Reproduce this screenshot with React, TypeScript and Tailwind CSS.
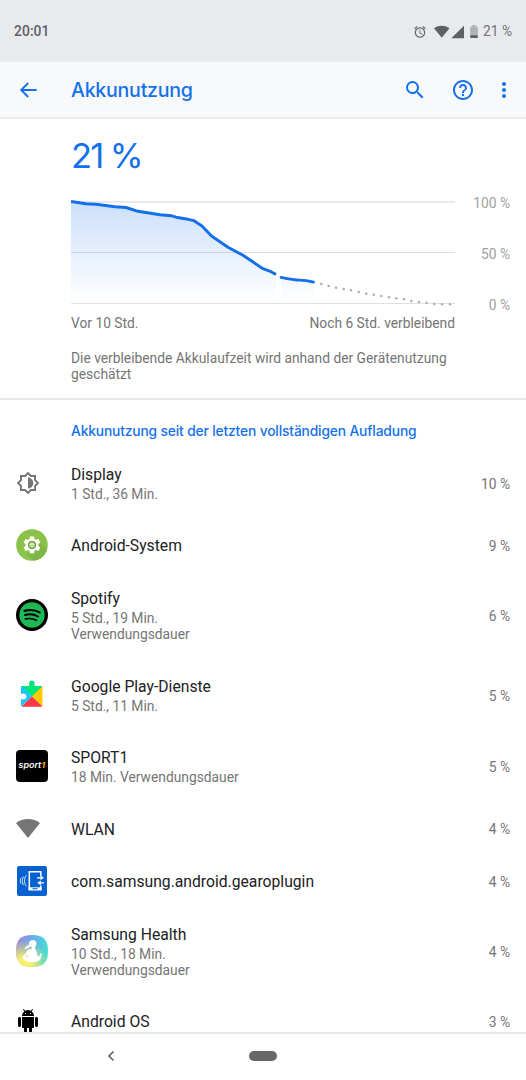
import React from "react";

type IconName =
  | "display" | "system" | "spotify" | "play" | "sport" | "wifi" | "gear" | "health" | "android";

interface Usage {
  name: string;
  lines: string[];
  percent: string;
  icon: IconName;
}

const usages: Usage[] = [
  { name: "Display", lines: ["1 Std., 36 Min."], percent: "10 %", icon: "display" },
  { name: "Android-System", lines: [], percent: "9 %", icon: "system" },
  { name: "Spotify", lines: ["5 Std., 19 Min.", "Verwendungsdauer"], percent: "6 %", icon: "spotify" },
  { name: "Google Play-Dienste", lines: ["5 Std., 11 Min."], percent: "5 %", icon: "play" },
  { name: "SPORT1", lines: ["18 Min. Verwendungsdauer"], percent: "5 %", icon: "sport" },
  { name: "WLAN", lines: [], percent: "4 %", icon: "wifi" },
  { name: "com.samsung.android.gearoplugin", lines: [], percent: "4 %", icon: "gear" },
  { name: "Samsung Health", lines: ["10 Std., 18 Min.", "Verwendungsdauer"], percent: "4 %", icon: "health" },
  { name: "Android OS", lines: [], percent: "3 %", icon: "android" },
];

const rowHeights = ["h-[52.5px]", "h-[71.6px]", "h-[87.6px]"];

function AppIcon({ name }: { name: IconName }) {
  switch (name) {
    case "display":
      return (
        <svg viewBox="0 0 24 24" className="size-6" fill="#757575">
          <path d="M20 15.310L23.310 12 20 8.690V4h-4.690L12 .690 8.690 4H4v4.690L.690 12 4 15.310V20h4.690L12 23.310 15.310 20H20v-4.690zM18.100 14.500v3.600h-3.600L12 20.600l-2.500-2.500H5.900v-3.600L3.400 12l2.500-2.500V5.900h3.600L12 3.400l2.500 2.500h3.600v3.600l2.500 2.500z" />
          <path d="M12 6.500c3 0 5.300 2.500 5.300 5.500s-2.300 5.500-5.300 5.500z" />
        </svg>
      );
    case "system":
      return (
        <svg viewBox="0 0 32 32" className="size-8">
          <defs>
            <clipPath id="systemDisc"><circle cx="16" cy="16" r="15.800" /></clipPath>
          </defs>
          <circle cx="16" cy="16" r="15.800" fill="#8bc34a" />
          <path clipPath="url(#systemDisc)" d="M24 14l10 10v10H20l-9-9 5-7z" fill="#80b646" />
          <path transform="translate(5.800 5.800) scale(.85)" fill="#fff" d="M19.430 12.980c.040-.320.070-.640.070-.980s-.030-.660-.070-.980l2.110-1.650c.190-.150.240-.420.120-.640l-2-3.460c-.120-.220-.390-.300-.610-.220l-2.490 1c-.520-.400-1.080-.730-1.690-.980l-.380-2.650C14.460 2.180 14.250 2 14 2h-4c-.250 0-.460.180-.490.420l-.380 2.650c-.610.250-1.170.590-1.690.980l-2.490-1c-.230-.090-.490 0-.610.220l-2 3.460c-.130.220-.070.490.120.640l2.110 1.650c-.040.320-.070.650-.070.980s.030.660.070.980l-2.110 1.650c-.190.150-.240.420-.120.640l2 3.460c.120.220.390.300.610.220l2.490-1c.520.400 1.080.730 1.690.980l.380 2.650c.030.240.240.420.490.420h4c.250 0 .460-.180.490-.420l.380-2.650c.610-.250 1.170-.590 1.690-.980l2.490 1c.230.090.490 0 .610-.220l2-3.460c.120-.220.070-.490-.120-.640z" />
          <circle cx="16" cy="16" r="3.400" fill="#c9e4a8" stroke="#67962f" strokeWidth="1.200" />
        </svg>
      );
    case "spotify":
      return (
        <svg viewBox="0 0 32 32" className="size-8" fill="none" strokeLinecap="round">
          <circle cx="16" cy="16" r="16" fill="#000" />
          <circle cx="16" cy="16" r="12.700" fill="#1eb955" />
          <path d="M8.600 11.900c5-1.400 10.800-.9 15 1.500" stroke="#000" strokeWidth="2.200" />
          <path d="M9 16c4.500-1.200 9.300-.7 13 1.500" stroke="#000" strokeWidth="1.900" />
          <path d="M9.400 19.900c4-.9 7.800-.5 11 1.400" stroke="#000" strokeWidth="1.600" />
        </svg>
      );
    case "play":
      return (
        <svg viewBox="0 0 32 32" className="size-8">
          <path d="M6.500 7h5.700c.8 0 1.200-.6 1-1.300a2.900 2.900 0 1 1 5.200 0c-.3.700.2 1.300 1 1.300h5.700c.8 0 1.400.6 1.300 1.300L15.900 17.500 5.200 7.400z" fill="#00e676" />
          <path d="M6 7.100L15.900 17.500 5.500 27.300c-.3-.3-.5-.6-.5-1v-5.300c0-.8.6-1.200 1.300-.9a2.900 2.900 0 1 0 0-5.200C5.600 15.200 5 14.800 5 14V8.400c0-.7.4-1.200 1-1.300z" fill="#18c5ff" />
          <path d="M26 7.400L15.900 17.500 26 27.500c.4-.3.500-.6.500-1V8.400c0-.4-.2-.8-.5-1z" fill="#ffca00" />
          <path d="M15.900 17.500L5.500 27.400c.3.200.6.300.9.300h18.800c.4 0 .7-.1.900-.4z" fill="#f63749" />
        </svg>
      );
    case "sport":
      return (
        <svg viewBox="0 0 32 32" className="size-8">
          <rect width="32" height="32" rx="4" fill="#000" />
          <text x="2.600" y="18.300" textLength="26.500" lengthAdjust="spacingAndGlyphs" fontSize="8" fontWeight="600" fontStyle="italic" fontFamily="Inter, sans-serif" fill="#fff">
            sport<tspan fill="#ffa51e" fontWeight="700">1</tspan>
          </text>
        </svg>
      );
    case "wifi":
      return (
        <svg viewBox="0 0 24 24" className="size-6" fill="#757575">
          <path d="M0 7C6.800 1.600 17.200 1.600 24 7L12 22z" />
        </svg>
      );
    case "gear":
      return (
        <svg viewBox="0 0 32 32" className="size-8" fill="none" stroke="#fff">
          <rect x="1" y="1" width="30" height="30" rx="2" fill="#0762d1" stroke="none" />
          <path d="M24.800 11V6.800H13.300v17.500h11.500V20.500" strokeWidth="1.500" />
          <path d="M12.600 22.300h12.900v3.200H12.600z" fill="#fff" stroke="none" />
          <path d="M16.500 23.700h5" stroke="#0762d1" strokeWidth="1.100" />
          <path d="M21 12.800h4.500M23.500 17.800H28" strokeWidth="1.300" />
          <path d="M24.500 10.400v4.800l3.500-2.400zM24.800 15.400v4.800l-3.600-2.400z" fill="#fff" stroke="none" />
          <path d="M5.200 12.700c-1.200 2-1.200 4.200 0 6.200M7.600 11.500c-1.700 2.700-1.700 5.900 0 8.600M10.200 10.300c-2.300 3.500-2.300 7.500 0 11" strokeWidth=".8" />
        </svg>
      );
    case "health":
      return (
        <svg viewBox="0 0 32 32" className="size-8">
          <defs>
            <linearGradient id="healthBase" x1="0" y1=".3" x2="1" y2=".45">
              <stop offset="0" stopColor="#a585dc" />
              <stop offset=".5" stopColor="#66aeea" />
              <stop offset="1" stopColor="#45e0d0" />
            </linearGradient>
            <radialGradient id="healthGlow" cx=".22" cy="1" r=".85">
              <stop offset=".3" stopColor="#faf06a" />
              <stop offset="1" stopColor="#d8f070" stopOpacity="0" />
            </radialGradient>
          </defs>
          <path d="M16 0C27.500 0 32 4.500 32 16s-4.500 16-16 16S0 27.500 0 16 4.500 0 16 0z" fill="url(#healthBase)" />
          <path d="M16 0C27.500 0 32 4.500 32 16s-4.500 16-16 16S0 27.500 0 16 4.500 0 16 0z" fill="url(#healthGlow)" />
          <circle cx="16.800" cy="8.600" r="3.700" fill="#fff" />
          <path d="M14 9.500c-2.400.5-4.600 1.900-5.600 4.600 2.400.1 4-1.300 6-2.600z" fill="#fff" />
          <path d="M13.800 14.300c1.500-.2 2.300-.9 2.300-2.500h3c-.2 1.300 0 2 .5 2.700 1 1.500 1.400 3.500 1.500 5.500l1.800 1.400c1-.9 1-2.100 1.500-2.900.6-.8 1.700.1 1.400 1-.6 2.600-1.300 5.300-3 6.200-4 2.200-9.600 2-12.800.3-1.400-.8-3.600-2.600-3.700-4 .8-1.800 3.800-3.500 4.400-5.600.5-1.300 1.500-1.900 3.100-2.100z" fill="#fff" />
          <path d="M11.500 18.800c-.5 1.200-1.300 1.900-2.200 2.500l2 1.100c.6-1.100.6-2.300.2-3.600z" fill="#d8e69a" />
        </svg>
      );
    case "android":
      return (
        <svg viewBox="0 0 24 24" className="size-6" fill="#000">
          <path d="M6 18c0 .550.450 1 1 1h1v3.500c0 .830.670 1.500 1.500 1.500s1.500-.670 1.500-1.500V19h2v3.500c0 .830.670 1.500 1.500 1.500s1.500-.670 1.500-1.500V19h1c.550 0 1-.450 1-1V8H6v10zM3.500 8C2.670 8 2 8.670 2 9.500v7c0 .830.670 1.500 1.500 1.500S5 17.330 5 16.500v-7C5 8.670 4.330 8 3.500 8zm17 0c-.830 0-1.500.670-1.500 1.500v7c0 .830.670 1.500 1.500 1.500s1.500-.670 1.500-1.500v-7c0-.830-.670-1.500-1.500-1.500zm-4.970-5.840l1.300-1.300c.200-.200.200-.510 0-.710-.200-.200-.510-.200-.710 0l-1.480 1.480C13.850 1.230 12.950 1 12 1c-.960 0-1.860.230-2.660.630L7.850.150c-.200-.200-.510-.200-.710 0-.200.200-.200.510 0 .710l1.310 1.310C6.970 3.260 6 5.010 6 7h12c0-1.990-.970-3.750-2.470-4.840zM10 5H9V4h1v1zm5 0h-1V4h1v1z" />
        </svg>
      );
  }
}

function StatusBar() {
  return (
    <header className="flex h-[62px] items-center justify-between bg-[#e8eaed] pl-[14px] pr-[14px] pt-px text-[13.8px] text-[#5f6062]">
      <span className="font-medium tracking-[0.1px]">20:01</span>
      <div className="flex items-center">
        <svg viewBox="0 0 24 24" className="mr-[7px] size-[14px]" fill="#66686a">
          <path d="M22 5.720l-4.600-3.860-1.290 1.530 4.600 3.860L22 5.720zM7.880 3.390L6.600 1.860 2 5.710l1.290 1.530 4.590-3.850zM12.500 8H11v6l4.750 2.850.750-1.230-4-2.370V8zM12 4c-4.970 0-9 4.030-9 9s4.020 9 9 9a9 9 0 0 0 0-18zm0 16c-3.870 0-7-3.130-7-7s3.130-7 7-7 7 3.130 7 7-3.130 7-7 7z" />
        </svg>
        <svg viewBox="0 0 30 14" className="mr-[6px] h-[14px] w-[30px]" fill="#5f6062">
          <path d="M0 3.200C4.500-.1 11-.1 15.500 3.200L7.750 12.800zM30 .8V13.200H17.300z" />
        </svg>
        <svg viewBox="0 0 8 14" className="mr-[5px] h-[14px] w-2">
          <path d="M2.300 0h3.400v1.500H7c.5 0 .8.300.8.800V11H.2V2.300c0-.5.3-.8.800-.8h1.300z" fill="#afb1b3" />
          <path d="M.2 10.300h7.600v2c0 .5-.3.800-.8.800H1c-.5 0-.8-.3-.8-.8z" fill="#5f6062" />
        </svg>
        <span className="text-[#707274]">21 %</span>
      </div>
    </header>
  );
}

function Toolbar() {
  return (
    <nav className="flex h-[57px] items-center border-b-2 border-[#eaebec] bg-[#f8f9fb] text-[#1471ea]">
      <svg viewBox="0 0 24 24" className="ml-4 size-6" fill="none" stroke="currentColor" strokeWidth="1.900">
        <path d="M20.700 12H5.500M12.200 5L5.200 12l7 7" />
      </svg>
      <h1 className="ml-[31px] flex-1 pt-[2px] font-[Inter] text-[19.6px] font-medium tracking-[-0.25px]">Akkunutzung</h1>
      <svg viewBox="0 0 24 24" className="size-6" fill="currentColor">
        <path d="M15.500 14h-.790l-.280-.270A6.471 6.471 0 0 0 16 9.500 6.500 6.500 0 1 0 9.500 16c1.610 0 3.090-.590 4.230-1.570l.270.280v.790l5 4.990L20.490 19l-4.990-5zm-6 0C7.010 14 5 11.990 5 9.500S7.010 5 9.500 5 14 7.010 14 9.500 11.990 14 9.500 14z" />
      </svg>
      <svg viewBox="0 0 24 24" className="ml-[23.5px] size-6" fill="currentColor">
        <path d="M11 18h2v-2h-2v2zm1-16C6.480 2 2 6.480 2 12s4.480 10 10 10 10-4.480 10-10S17.520 2 12 2zm0 18c-4.410 0-8-3.590-8-8s3.590-8 8-8 8 3.590 8 8-3.590 8-8 8zm0-14c-2.210 0-4 1.790-4 4h2c0-1.100.900-2 2-2s2 .900 2 2c0 2-3 1.750-3 5h2c0-2.250 3-2.500 3-5 0-2.210-1.790-4-4-4z" />
      </svg>
      <svg viewBox="0 0 24 24" className="ml-[17.5px] mr-[10px] size-6" fill="currentColor">
        <circle cx="12" cy="6" r="2" /><circle cx="12" cy="12" r="2" /><circle cx="12" cy="18" r="2" />
      </svg>
    </nav>
  );
}

const mainCurve =
  "0,5.500 15,7.700 25,8.300 44,10.700 55,11.500 67,15.300 89,18.700 100,19.700 105,21.200 117,23.300 123,24.700 131,30 140.500,40 157,51.300 172,59.300 192,72.700 200,75.700 205,78.500";
const forecast = [
  [250.3, 88], [257.7, 90], [265, 91.7], [272.7, 93], [280, 94.3], [287.7, 96], [295.3, 97.7],
  [302.7, 98.7], [310.3, 100], [318, 101.3], [325.3, 102.3], [333, 103.3], [340.3, 105],
  [348, 106], [355.7, 107], [363.3, 108], [371, 108.3], [379, 108.3],
];

function BatteryChart() {
  return (
    <svg viewBox="0 0 384 112" className="h-[112px] w-[384px] shrink-0" fill="none">
      <defs>
        <linearGradient id="levelFill" x1="0" y1="6" x2="0" y2="108" gradientUnits="userSpaceOnUse">
          <stop offset="0" stopColor="#1a73e8" stopOpacity=".22" />
          <stop offset="1" stopColor="#1a73e8" stopOpacity="0" />
        </linearGradient>
      </defs>
      <path d="M0 6h384" stroke="#e9eaea" strokeWidth="1.800" />
      <path d="M0 56.500h384M0 107.500h384" stroke="#dfe0e1" strokeWidth="1" />
      <polygon points={`${mainCurve} 205,108 0,108`} fill="url(#levelFill)" />
      <polygon points="210,81.300 226,84 237,84.700 242.500,86.300 242.500,108 210,108" fill="url(#levelFill)" />
      <polyline points={mainCurve} stroke="#136fea" strokeWidth="2.900" strokeLinejoin="round" />
      <path d="M210 81.300Q223 84 229 84.200T242.500 86.200" stroke="#136fea" strokeWidth="2.800" strokeLinecap="round" />
      {forecast.map(([x, y]) => <circle key={x} cx={x} cy={y} r="1.300" fill="#a3b1b9" />)}
    </svg>
  );
}

export default function App() {
  return (
    <div className="flex h-[1080px] w-[526px] flex-col overflow-hidden bg-white font-[Roboto,sans-serif] text-[#757575]">
      <StatusBar />
      <Toolbar />
      <main className="min-h-0 flex-1 overflow-hidden">
        <section className="h-[281px] border-b-2 border-[#e8e8e8] pl-[71px] pr-4 pt-[15px]">
          <div className="h-[62px] font-[Inter] text-[34.5px] leading-[44px] tracking-[-1.7px] text-[#1471ea] [word-spacing:-1px]">21 %</div>
          <div className="flex justify-between">
            <BatteryChart />
            <div className="-mt-[2px] flex h-[120px] flex-col justify-between text-right text-[13.8px] leading-[18px] text-[#a0a0a0]">
              <span>100 %</span><span>50 %</span><span>0 %</span>
            </div>
          </div>
          <div className="flex w-[384px] justify-between text-[13.8px] leading-[18px]">
            <span>Vor 10 Std.</span><span>Noch 6 Std. verbleibend</span>
          </div>
          <p className="mt-[18px] w-[400px] text-[13.8px] leading-4">Die verbleibende Akkulaufzeit wird anhand der Gerätenutzung<br />geschätzt</p>
        </section>
        <section>
          <h2 className="h-12 pl-[71px] pt-[21px] font-[Inter] text-[13.8px] font-medium leading-5 tracking-[-0.15px] text-[#1471ea]">Akkunutzung seit der letzten vollständigen Aufladung</h2>
          {usages.map((u) => (
            <div key={u.name} className={`flex items-center pl-[15.5px] pr-4 ${rowHeights[u.lines.length]}`}>
              <div className="w-[55.5px] shrink-0 pb-[1.5px]"><AppIcon name={u.icon} /></div>
              <div className={u.lines.length ? "flex-1 pb-[1.5px]" : "flex-1 pt-px"}>
                <div className="text-[15.7px] leading-[22px] text-[#202124]">{u.name}</div>
                {u.lines.map((l) => <div key={l} className="text-[13.8px] leading-4">{l}</div>)}
              </div>
              <span className="pt-px text-[13.8px]">{u.percent}</span>
            </div>
          ))}
        </section>
      </main>
      <footer className="flex h-12 items-center border-t-2 border-[#e8e8e8] pb-[2px]">
        <svg viewBox="0 0 8 12" className="ml-[107px] h-3 w-2" fill="none" stroke="#606060" strokeWidth="1.600">
          <path d="M6.500 1.500L2 6l4.500 4.500" />
        </svg>
        <span className="ml-[134px] h-[10px] w-7 rounded-full bg-[#676767]" />
      </footer>
    </div>
  );
}
